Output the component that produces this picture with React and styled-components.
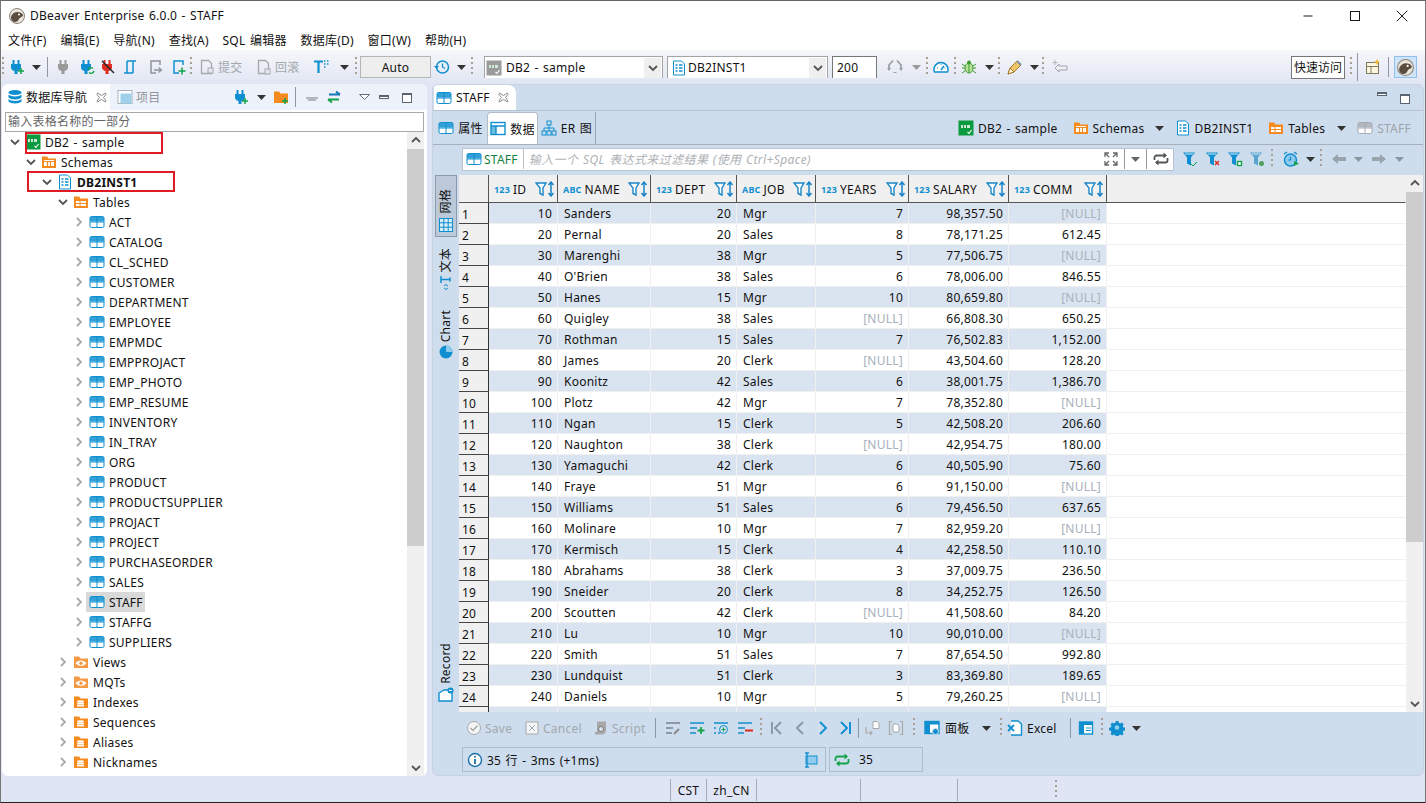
import React from 'react';
import styled, { createGlobalStyle } from 'styled-components';

const FONT = `"Noto Sans", "Noto Sans CJK SC", sans-serif`;
const BLUE = '#0f8fd0';
const ORANGE = '#f58a1f';
const GREEN = '#12a34a';
const GREY = '#a8a8a8';

const Ico = ({ s = 16, children }) => (
  <svg width={s} height={s} viewBox="0 0 16 16" style={{ display: 'block', flex: 'none' }}>
    {children}
  </svg>
);

const TableIcon = ({ c = BLUE }) => (
  <Ico>
    <rect x="1" y="2.5" width="14" height="11" rx="1.5" fill="#fff" stroke={c} />
    <rect x="1" y="2.5" width="14" height="5" rx="1.5" fill={c} opacity="0.85" />
    <path d="M8 3v10M1 8h14" stroke={c} fill="none" />
  </Ico>
);

const Folder = ({ children, c = ORANGE }) => (
  <Ico>
    <path d="M1 2.5h5l1.5 2H15v9.5H1z" fill={c} />
    {children}
  </Ico>
);

const FolderTable = () => (
  <Folder>
    <path d="M3 7h10v5H3z" fill="#fff" />
    <path d="M3 9.5h10M7 7v5" stroke={ORANGE} />
  </Folder>
);

const FolderColumns = () => (
  <Folder>
    <path d="M3 6h10v6H3z" fill="#fff" />
    <path d="M3 7.5h10M6.5 8v4M9.5 8v4" stroke={ORANGE} strokeWidth="1.2" />
  </Folder>
);

const FolderEye = () => (
  <Folder c="#f39a45">
    <path d="M2.5 9.2c3-3.6 8-3.6 11 0-3 3.4-8 3.4-11 0z" fill="#fff" />
    <circle cx="8" cy="9.2" r="1.7" fill="#f39a45" />
  </Folder>
);

const FolderStack = () => (
  <Folder>
    <ellipse cx="7.5" cy="7.5" rx="3.5" ry="1.3" fill="#fff" />
    <path d="M4 9h7v1.4H4zM4 11h7v1.4H4z" fill="#fff" />
  </Folder>
);

const Db2Icon = ({ c = '#0a9a3f' }) => (
  <Ico>
    <rect x="0.5" y="0.5" width="15" height="15" fill={c} />
    <path d="M3 5h2v3H3zM6 5h2v3H6zM9 5h3v3H9z" fill="#cfe9d6" />
    <path d="M9.500 12l1.500 1.500 2.500-3.500" stroke="#fff" strokeWidth="1.100" fill="none" />
  </Ico>
);

const SchemaIcon = () => (
  <Ico>
    <path d="M2.5 1h8l3 3v11h-11z" fill="#fff" stroke={BLUE} />
    <path d="M4.5 5h2M8 5h3.5M4.5 8h2M8 8h3.5M4.5 11h2M8 11h3.5" stroke={BLUE} strokeWidth="1.4" />
  </Ico>
);

const Chevron = ({ down }) => (
  <svg width="10" height="10" viewBox="0 0 10 10" style={{ display: 'block', flex: 'none' }}>
    <path
      d={down ? 'M1 3l4 4 4-4' : 'M3 1l4 4-4 4'}
      fill="none"
      stroke={down ? '#555' : '#aaa'}
      strokeWidth="1.8"
    />
  </svg>
);

const Caret = ({ c = '#333' }) => (
  <svg width="9" height="5" viewBox="0 0 9 5" style={{ display: 'block' }}>
    <path d="M0 0h9L4.500 5z" fill={c} />
  </svg>
);

const PlugShape = ({ c }) => (
  <g fill={c}>
    <rect x="3.500" y="1" width="2" height="4" />
    <rect x="8.500" y="1" width="2" height="4" />
    <path d="M2 5h10v3a5 4 0 0 1-3.500 4v3h-3v-3A5 4 0 0 1 2 8z" />
  </g>
);

const PlugPlus = () => (
  <Ico>
    <PlugShape c={BLUE} />
    <path d="M12 9v6M9 12h6" stroke={GREEN} strokeWidth="1.5" />
  </Ico>
);

const PlugGrey = () => (
  <Ico>
    <PlugShape c="#9a9a9a" />
  </Ico>
);

const PlugRefresh = () => (
  <Ico>
    <PlugShape c={BLUE} />
    <path d="M9 11a3 3 0 0 1 5-1.500M15 12a3 3 0 0 1-5 1.500" stroke={GREEN} strokeWidth="1.300" fill="none" />
  </Ico>
);

const PlugOff = () => (
  <Ico>
    <PlugShape c="#e02b20" />
    <path d="M2 2l12 12" stroke="#222" strokeWidth="1.400" />
  </Ico>
);

const TxIcon = () => (
  <Ico>
    <path d="M5 2h9M5 2v12M11 2v12M2 14h9" stroke={BLUE} strokeWidth="1.500" fill="none" />
  </Ico>
);

const TxArrowIcon = ({ c = '#8d949c', plus }) => (
  <Ico>
    <path d="M4 5V2h9v4M4 2v12h5" stroke={c} strokeWidth="1.500" fill="none" />
    {plus ? (
      <path d="M12 8.500v7M8.500 12h7" stroke={GREEN} strokeWidth="1.500" />
    ) : (
      <path d="M7 11h7M11.500 8.500L14.500 11l-3 2.500" stroke={c} strokeWidth="1.300" fill="none" />
    )}
  </Ico>
);

const PageIcon = ({ back }) => (
  <Ico>
    <path d="M2.500 1.500h7l3 3v10h-10z" fill="none" stroke={GREY} strokeWidth="1.300" />
    <rect x="9" y={back ? 10 : 9} width="5" height="5" fill="#e3e9f4" stroke={GREY} />
  </Ico>
);

const RowLinkIcon = () => (
  <Ico>
    <path d="M2 7v6h6M6 11l2 2-2 2" fill="none" stroke={GREY} strokeWidth="1.200" />
    <path d="M9 1.500h4l2 2v5H9z" fill="#fff" stroke={GREY} />
  </Ico>
);

const RowDocIcon = () => (
  <Ico>
    <path d="M4 1.500H1.500v13H4M12 1.500h2.500v13H12" fill="none" stroke={GREY} strokeWidth="1.200" />
    <path d="M5 4h4l2 2v6H5z" fill="#fff" stroke={GREY} />
  </Ico>
);

const FormatIcon = () => (
  <Ico>
    <path d="M1 2.500h9M5.500 2.500V14" stroke={BLUE} strokeWidth="2.200" fill="none" />
    <path d="M11 2h1.500M14 2h1.500M11 5h1.500M14 5h1.500M11 8h1.500" stroke={BLUE} strokeWidth="1.400" />
  </Ico>
);

const ClockIcon = ({ c = BLUE }) => (
  <Ico>
    <circle cx="8.500" cy="8" r="6" fill="none" stroke={c} strokeWidth="1.500" />
    <path d="M8.500 4.500V8l2.500 1.500" stroke={c} strokeWidth="1.300" fill="none" />
    <path d="M0 7l2.500 3L5 7z" fill={c} />
  </Ico>
);

const AlarmIcon = () => (
  <Ico>
    <circle cx="7.500" cy="9" r="6" fill="#8fcbee" stroke={BLUE} strokeWidth="1.500" />
    <path d="M1 3l3-2M14 3l-3-2" stroke={BLUE} strokeWidth="1.500" />
    <path d="M7.500 5.500V9H5" stroke={BLUE} strokeWidth="1.200" fill="none" />
    <path d="M11 10l5 2.500-5 2.500z" fill={GREEN} />
  </Ico>
);

const RollbackIcon = () => (
  <Ico>
    <path d="M6 1.500L2 6v5M10 1.500L14 6v5" stroke="#9aa0a6" strokeWidth="1.800" fill="none" />
    <path d="M0 9l2 3 2-3zM12 9l2 3 2-3z" fill="#9aa0a6" />
    <path d="M6.500 13.500h3" stroke="#9aa0a6" />
  </Ico>
);

const GaugeIcon = () => (
  <Ico>
    <path d="M1.500 13a7 7 0 1 1 13 0z" fill="#fff" stroke={BLUE} strokeWidth="1.500" />
    <path d="M8 11l3-4" stroke={BLUE} strokeWidth="1.500" />
    <path d="M4 9h1M11.500 9h1M8 5v1" stroke={BLUE} />
  </Ico>
);

const BugIcon = () => (
  <Ico>
    <ellipse cx="8" cy="9" rx="4" ry="5" fill="#b7e29a" stroke="#3d9b2f" />
    <circle cx="8" cy="3.500" r="2" fill="#3d9b2f" />
    <path d="M8 5v9M1 5l3 2M15 5l-3 2M1 9h3M15 9h-3M1 14l3-2M15 14l-3-2" stroke="#3d9b2f" />
  </Ico>
);

const PenIcon = () => (
  <Ico>
    <path d="M1 15l2-6 7-7 4 4-7 7z" fill="#efc56a" stroke="#a57a2a" />
    <path d="M1 15l2-6 4 4z" fill="#fff2d0" stroke="#a57a2a" />
    <path d="M10 2l4 4" stroke="#7b8fa6" strokeWidth="2" />
  </Ico>
);

const HandIcon = () => (
  <Ico>
    <path d="M7 5L3 9l4 4v-2h8V7H7z" fill="#eef0f3" stroke="#a0a6ae" />
    <path d="M3 1v5M.5 3.500h5" stroke="#b4b8bd" />
  </Ico>
);

const PerspectiveIcon = () => (
  <Ico>
    <rect x="1.500" y="3.500" width="12" height="11" fill="#fdf6df" stroke="#7e7a62" />
    <path d="M1.500 7.500h12M6 7.500v7" stroke="#7e7a62" />
    <path d="M12 0l1 2 2 1-2 1-1 2-1-2-2-1 2-1z" fill="#f2b632" />
  </Ico>
);

const BeaverLogo = ({ s = 16 }) => (
  <svg width={s} height={s} viewBox="0 0 16 16" style={{ display: 'block', flex: 'none' }}>
    <circle cx="8" cy="8" r="7.500" fill="#e9e4dd" stroke="#8c8377" />
    <path d="M2 10c0-3 3-6 6-6 3 0 5 1 6 3 0 2-3 2-4 4-1 2-2 3-4 3-2 0-4-2-4-4z" fill="#5c4c40" />
    <circle cx="10" cy="6.500" r="1" fill="#fff" />
  </svg>
);

const CrossTab = () => (
  <svg width="11" height="11" viewBox="0 0 11 11" style={{ display: 'block', flex: 'none' }}>
    <path
      d="M1.500 1L5.500 3.500 9.500 1l.5 1.500L7.500 5.500 10 9l-.5 1-4-2.500-4 2.500L1 9l2.500-3.500L1 2.500z"
      fill="#fff"
      stroke="#8a8a8a"
    />
  </svg>
);

const SwapArrows = () => (
  <Ico>
    <path d="M3 5.500h11M10 2.500l4 3" stroke="#1676b8" strokeWidth="2" fill="none" />
    <path d="M13 10.500H2M6 13.500l-4-3" stroke={GREEN} strokeWidth="2" fill="none" />
  </Ico>
);

const FunnelIcon = ({ c = BLUE, children }) => (
  <Ico>
    <path d="M1 1.500h12l-4 5v8l-4-2v-6z" fill={c} />
    <path d="M3 3h8" stroke="#cfe8f7" />
    {children}
  </Ico>
);

const SortFilter = () => (
  <svg width="20" height="16" viewBox="0 0 20 16" style={{ display: 'block', flex: 'none' }}>
    <path d="M1 2h10L8 7v7L5 12.500V7z" fill="#fff" stroke="#1a86c7" strokeWidth="1.400" />
    <path d="M16 1v14M13.500 4L16 1l2.500 3M13.500 12l2.500 3 2.500-3" fill="none" stroke="#1a86c7" strokeWidth="1.500" />
  </svg>
);

const ArrowFat = ({ left, c = '#9aa4ad' }) => (
  <Ico>
    <path d={left ? 'M1 8l6-5v3h8v4H7v3z' : 'M15 8L9 3v3H1v4h8v3z'} fill={c} />
  </Ico>
);

const GridIcon = () => (
  <Ico>
    <rect x="1.500" y="1.500" width="13" height="13" fill="#d9ecf7" stroke={BLUE} />
    <path d="M1.500 5.800h13M1.500 10.200h13M5.800 1.500v13M10.200 1.500v13" stroke={BLUE} />
  </Ico>
);

const PieIcon = () => (
  <Ico>
    <circle cx="8" cy="8" r="6.500" fill={BLUE} />
    <path d="M8 8V1.500A6.500 6.500 0 0 1 14.500 8z" fill="#8cc9ec" />
  </Ico>
);

const TextIcon = () => (
  <Ico>
    <path d="M3 1v7M3 4.500h9M12 2.500v4" stroke={BLUE} strokeWidth="1.500" fill="none" />
    <path d="M6 11l2-1.500 2 1.500M6 13l2 1.500 2-1.500" stroke={BLUE} fill="none" />
  </Ico>
);

const RecordIcon = () => (
  <Ico>
    <path d="M1 6l5-3h8v11H1z" fill="#fff" stroke={BLUE} strokeWidth="1.400" />
    <circle cx="12.500" cy="3.500" r="3" fill={BLUE} />
    <path d="M11 3.500h3" stroke="#fff" />
  </Ico>
);

const DataTabIcon = () => (
  <Ico>
    <rect x="1" y="1.500" width="14" height="12" fill="#fff" stroke={BLUE} strokeWidth="1.400" />
    <path d="M1 5h14M6 5v8" stroke={BLUE} strokeWidth="1.400" />
    <path d="M1 5h5v8H1z" fill={BLUE} opacity="0.6" />
  </Ico>
);

const ErIcon = () => (
  <Ico>
    <rect x="6" y="1" width="4" height="4" fill="none" stroke={BLUE} />
    <rect x="1" y="11" width="4" height="4" fill="none" stroke={BLUE} />
    <rect x="6" y="11" width="4" height="4" fill="none" stroke={BLUE} />
    <rect x="11" y="11" width="4" height="4" fill="none" stroke={BLUE} />
    <path d="M8 5v6M3 11V8h10v3" fill="none" stroke={BLUE} />
  </Ico>
);

const ExpandIcon = () => (
  <Ico>
    <path d="M2 6V2h4M14 6V2h-4M2 10v4h4M14 10v4h-4M2 2l4 4M14 2l-4 4M2 14l4-4M14 14l-4-4" fill="none" stroke="#666" strokeWidth="1.300" />
  </Ico>
);

const RefreshIcon = ({ c = '#555' }) => (
  <Ico>
    <path d="M1.500 9V6.500a2 2 0 0 1 2-2H13M14.500 7v2.500a2 2 0 0 1-2 2H3" fill="none" stroke={c} strokeWidth="1.800" />
    <path d="M10.500 1.500l3.500 3-3.500 3zM5.500 8.500l-3.500 3 3.500 3z" fill={c} />
  </Ico>
);

const SaveIcon = () => (
  <Ico>
    <circle cx="8" cy="8" r="6.500" fill="#f3f5f7" stroke={GREY} />
    <path d="M4.500 8l2.500 2.500 4.500-5" fill="none" stroke={GREY} strokeWidth="1.400" />
  </Ico>
);

const CancelIcon = () => (
  <Ico>
    <rect x="2" y="2" width="12" height="12" fill="#f3f5f7" stroke={GREY} />
    <path d="M5 5l6 6M11 5l-6 6" stroke={GREY} />
  </Ico>
);

const ScriptIcon = () => (
  <Ico>
    <path d="M4 1.500h9V10a4 4 0 0 1-4 4.500H2V12h2z" fill={GREY} />
    <circle cx="8" cy="9" r="2.500" fill="#dfe7f0" stroke="#777" />
  </Ico>
);

const RowsIcon = ({ c = BLUE, mark, dash }) => (
  <Ico>
    <path d="M1 3h14" stroke={c} strokeWidth="1.500" />
    <path d={dash ? 'M1 8h2M1 13h2M5 13h2' : 'M1 8h7M1 13h6'} stroke={c} strokeWidth="1.500" />
    {mark === 'plus' && <path d="M12 7v7M8.500 10.500h7" stroke={GREEN} strokeWidth="1.800" />}
    {mark === 'minus' && <path d="M8 10.500h8" stroke="#e0281e" strokeWidth="2" />}
    {mark === 'copy' && (
      <>
        <circle cx="10.500" cy="9.500" r="4" fill="none" stroke={c} />
        <path d="M10.500 7.500v4M8.500 9.500h4" stroke={GREEN} />
      </>
    )}
    {mark === 'edit' && <path d="M9 14l5-5" stroke="#888" strokeWidth="2" />}
  </Ico>
);

const NavIcon = ({ d, c = BLUE }) => (
  <Ico>
    <path d={d} fill="none" stroke={c} strokeWidth="1.900" />
  </Ico>
);

const PanelIcon = () => (
  <Ico>
    <rect x="1" y="1.500" width="14" height="12" fill="#fff" stroke={BLUE} strokeWidth="1.400" />
    <path d="M1 1.500h14v3H1zM1 4.500h5v9H1z" fill={BLUE} />
    <circle cx="11.500" cy="11.500" r="3" fill={BLUE} stroke="#cedded" />
  </Ico>
);

const ExcelIcon = () => (
  <Ico>
    <path d="M4 1h7l3.500 3v11H4" fill="#fff" stroke={BLUE} strokeWidth="1.400" />
    <path d="M1 5l6 6M7 5l-6 6" stroke={BLUE} strokeWidth="1.800" />
  </Ico>
);

const FormIcon = () => (
  <Ico>
    <rect x="1.500" y="2" width="13" height="12" fill="#fff" stroke={BLUE} strokeWidth="1.400" />
    <path d="M1.500 2h13v3h-13zM1.500 5H6v9H1.500z" fill={BLUE} />
    <path d="M8 8h5M8 10.500h5" stroke={BLUE} />
  </Ico>
);

const GearIcon = () => (
  <Ico>
    <path
      d="M6.500 1h3l.4 2 1.800.8 1.700-1.100 2 2.100-1.100 1.700.7 1.700 2 .3v3l-2 .4-.7 1.700 1.100 1.700-2 2-1.700-1.100-1.800.7-.4 2h-3l-.4-2-1.800-.7-1.700 1.100-2-2 1.100-1.700-.7-1.700-2-.4v-3l2-.3.7-1.700-1.100-1.700 2-2.100 1.700 1.100 1.800-.8z"
      fill={BLUE}
      transform="scale(.9) translate(1 0)"
    />
    <circle cx="8" cy="7.500" r="2.300" fill="#8fd0f2" />
  </Ico>
);

const InfoIcon = () => (
  <Ico>
    <circle cx="8" cy="8" r="6.500" fill="#fff" stroke="#1b6fa8" strokeWidth="1.400" />
    <path d="M8 7v5" stroke="#1b6fa8" strokeWidth="1.800" />
    <circle cx="8" cy="4.800" r="1" fill="#1b6fa8" />
  </Ico>
);

const PinIcon = () => (
  <Ico>
    <rect x="4" y="4" width="11" height="8" fill="#8fcbee" stroke={BLUE} />
    <path d="M3 1h4M3 15h4M5 1v14" stroke={BLUE} strokeWidth="1.300" />
  </Ico>
);

const GlobalStyle = createGlobalStyle`
  html, body {
    margin: 0;
    padding: 0;
    background: #fff;
  }
  * {
    box-sizing: border-box;
  }
`;

const Root = styled.div`
  width: 1426px;
  height: 803px;
  display: flex;
  flex-direction: column;
  font-family: ${FONT};
  font-size: 12px;
  letter-spacing: 0.25px;
  word-spacing: 1px;
  color: #111;
  border-top: 1px solid #666;
  border-bottom: 1px solid #222;
  border-left: 1px solid #777;
  border-right: 1px solid #777;
  overflow: hidden;
  background: #dfe5f4;
`;

const TitleBar = styled.div`
  height: 29px;
  background: #fff;
  display: flex;
  align-items: center;
  padding-left: 8px;
  gap: 5px;
  flex: none;
`;

const WindowButtons = styled.div`
  margin-left: auto;
  display: flex;
  align-items: center;
  margin-right: 17px;
  gap: 35px;
`;

const MenuBar = styled.div`
  height: 20px;
  background: #fff;
  display: flex;
  align-items: center;
  padding-left: 7px;
  gap: 13.75px;
  flex: none;
`;

const Toolbar = styled.div`
  height: 34px;
  flex: none;
  display: flex;
  align-items: center;
  background: linear-gradient(#f6f7fa, #e1e6f4);
`;

const Slot = styled.div`
  width: ${(p) => p.$w}px;
  flex: none;
  display: flex;
  align-items: center;
  justify-content: ${(p) => (p.$left ? 'flex-start' : 'center')};
  gap: ${(p) => p.$gap || 0}px;
  color: ${(p) => p.$color || 'inherit'};
  margin-left: ${(p) => p.$ml || 0}px;
`;

const Handle = styled.div`
  width: 2px;
  height: 20px;
  flex: none;
  margin: 0 ${(p) => p.$m ?? 2}px;
  background: repeating-linear-gradient(#a8a095 0 2px, transparent 2px 5px);
`;

const Sep = styled.div`
  width: 1px;
  height: ${(p) => p.$h || 20}px;
  flex: none;
  background: ${(p) => p.$c || '#8e97a3'};
  margin: 0 ${(p) => p.$m ?? 3}px;
`;

const AutoButton = styled.div`
  width: 71px;
  height: 22px;
  margin-left: 2px;
  border: 1px solid #b5b5b5;
  background: #eeeeee;
  display: flex;
  align-items: center;
  justify-content: center;
  flex: none;
`;

const Combo = styled.div`
  width: ${(p) => p.$w}px;
  height: 22px;
  margin-left: ${(p) => p.$ml}px;
  flex: none;
  border: 1px solid #a5a5a5;
  border-bottom: none;
  background: #fff;
  display: flex;
  align-items: center;
  padding: 0 1px 0 ${(p) => p.$pl}px;
  gap: ${(p) => p.$gap}px;
`;

const ComboArrow = styled.div`
  margin-left: auto;
  width: 17px;
  height: 20px;
  background: #efefef;
  display: flex;
  align-items: center;
  justify-content: center;
`;

const NumInput = styled.div`
  width: 45px;
  height: 22px;
  margin-left: 4px;
  flex: none;
  border: 1px solid #777;
  border-bottom: none;
  background: #fff;
  padding-left: 4px;
  line-height: 21px;
`;

const ToolRight = styled.div`
  margin-left: auto;
  display: flex;
  align-items: center;
  padding-right: 8px;
`;

const QuickAccess = styled.div`
  width: 54px;
  height: 23px;
  border: 1px solid #777;
  background: #fff;
  text-align: center;
  line-height: 21px;
  letter-spacing: 0;
`;

const PerspectiveBox = styled.div`
  width: 23px;
  height: 22px;
  background: #cfe4f8;
  border: 1px solid #92c0ec;
  display: flex;
  align-items: center;
  justify-content: center;
`;

const Body = styled.div`
  flex: 1;
  min-height: 0;
  display: flex;
  padding: 0 1px;
  gap: 5px;
`;

const LeftPanel = styled.div`
  width: 425px;
  height: 692px;
  flex: none;
  background: #fff;
  border-radius: 6px;
  display: flex;
  flex-direction: column;
  overflow: hidden;
`;

const PanelHead = styled.div`
  height: 26px;
  flex: none;
  display: flex;
  align-items: center;
  background: #edf1fa;
`;

const ViewTab = styled.div`
  width: 108px;
  height: 100%;
  flex: none;
  background: #fff;
  display: flex;
  align-items: center;
  padding-left: 5px;
  gap: 3px;
  border-radius: 6px 0 0 0;
`;

const TreeFilter = styled.div`
  height: 20px;
  margin: 2px 3px 0;
  flex: none;
  border: 1px solid #a9a9a9;
  color: #666;
  padding-left: 2px;
  line-height: 18px;
`;

const TreeArea = styled.div`
  flex: 1;
  min-height: 0;
  display: flex;
  margin-right: 3px;
`;

const TreeList = styled.div`
  flex: 1;
  min-width: 0;
`;

const Row = styled.div`
  height: 20px;
  display: flex;
  align-items: center;
  position: relative;
  padding-left: ${(p) => 8 + p.$level * 16}px;
  gap: 2px;
`;

const NodeBody = styled.div`
  display: flex;
  align-items: center;
  gap: 4px;
  height: 20px;
  padding: 0 2px 0 3px;
  background: ${(p) => (p.$active ? '#d9d9d9' : 'transparent')};
  font-weight: ${(p) => (p.$bold ? 700 : 400)};
`;

const Callout = styled.div`
  position: absolute;
  left: ${(p) => p.$left}px;
  width: ${(p) => p.$w}px;
  top: ${(p) => p.$top}px;
  height: ${(p) => p.$h}px;
  border: 2px solid #e01b24;
  pointer-events: none;
`;

const Scrollbar = styled.div`
  width: 17px;
  flex: none;
  background: #f0f0f0;
  display: flex;
  flex-direction: column;
`;

const ScrollEnd = styled.div`
  height: 17px;
  flex: none;
  display: flex;
  align-items: center;
  justify-content: center;
  transform: ${(p) => (p.$up ? 'scaleY(-1)' : 'none')};
  margin-top: ${(p) => (p.$bottom ? 'auto' : '0')};
`;

const ScrollThumb = styled.div`
  height: ${(p) => p.$h}px;
  flex: none;
  background: #cdcdcd;
`;

const RightPanel = styled.div`
  width: 992px;
  height: 692px;
  flex: none;
  background: #cedded;
  border: 1px solid #c9d2de;
  border-radius: 6px;
  display: flex;
  flex-direction: column;
  overflow: hidden;
`;

const EditorTabs = styled.div`
  height: 26px;
  flex: none;
  display: flex;
  align-items: flex-end;
  border-bottom: 1px solid #b9c3cf;
  padding-left: 1px;
`;

const EditorTab = styled.div`
  width: 82px;
  height: 25px;
  background: #fff;
  border-radius: 0 8px 0 0;
  display: flex;
  align-items: center;
  padding-left: 2px;
  gap: 4px;
`;

const ViewControls = styled.div`
  margin-left: auto;
  align-self: center;
  display: flex;
  gap: 13px;
  margin-right: 13px;
`;

const MinBox = styled.div`
  width: 10px;
  height: ${(p) => (p.$flat ? 4 : 10)}px;
  border: 1px solid #5a6470;
  border-top-width: 2px;
  background: #fff;
  margin-top: ${(p) => (p.$flat ? 0 : 2)}px;
`;

const SubTabs = styled.div`
  height: 34px;
  flex: none;
  display: flex;
  align-items: stretch;
  padding-top: 1px;
  padding-left: 1px;
  border-bottom: 1px solid #a7b0bb;
`;

const SubTab = styled.div`
  width: ${(p) => p.$w}px;
  display: flex;
  align-items: center;
  justify-content: center;
  gap: 4px;
  flex: none;
  background: ${(p) => (p.$active ? '#fff' : 'transparent')};
  border: ${(p) => (p.$active ? '1px solid #b3bcc7' : 'none')};
  border-bottom: none;
  border-radius: ${(p) => (p.$active ? '4px 4px 0 0' : '0')};
  border-right: ${(p) => (p.$last ? '1px solid #9aa3ae' : undefined)};
`;

const Crumbs = styled.div`
  margin-left: auto;
  display: flex;
  align-items: center;
  padding-right: 12px;
`;

const Crumb = styled.div`
  display: flex;
  align-items: center;
  gap: 4px;
  margin-left: ${(p) => p.$ml || 0}px;
  color: ${(p) => p.$color || 'inherit'};
`;

const FilterRow = styled.div`
  height: 30px;
  flex: none;
  display: flex;
  align-items: center;
  padding: 0 0 2px 29px;
`;

const FilterBox = styled.div`
  width: 712px;
  height: 23px;
  background: #fff;
  border: 1px solid #b9c3cf;
  display: flex;
  align-items: center;
  padding-left: 3px;
  gap: 2px;
  flex: none;
`;

const FilterName = styled.span`
  color: #15803d;
`;

const FilterHint = styled.span`
  color: #aeb1b5;
  font-style: italic;
  letter-spacing: 0.4px;
`;

const FilterTail = styled.div`
  margin-left: auto;
  display: flex;
  align-items: center;
`;

const GridRow = styled.div`
  height: 537px;
  flex: none;
  display: flex;
`;

const SideTabs = styled.div`
  width: 26px;
  flex: none;
  display: flex;
  flex-direction: column;
  align-items: center;
  padding-bottom: 7px;
`;

const SideTab = styled.div`
  width: 22px;
  height: ${(p) => p.$h}px;
  flex: none;
  display: flex;
  flex-direction: column;
  align-items: center;
  justify-content: flex-end;
  gap: ${(p) => p.$gap ?? 3}px;
  padding-bottom: 3px;
  margin-top: ${(p) => p.$mt || 0}px;
  background: ${(p) => (p.$active ? '#bcc9d8' : 'transparent')};
  border: ${(p) => (p.$active ? '1px solid #8f9aa7' : 'none')};
`;

const SideLabel = styled.div`
  writing-mode: vertical-rl;
  text-orientation: sideways;
  transform: rotate(180deg);
  line-height: 16px;
`;

const GridWrap = styled.div`
  flex: 1;
  min-width: 0;
  overflow: hidden;
  background: #fff;
`;

const Table = styled.table`
  width: 100%;
  table-layout: fixed;
  border-collapse: separate;
  border-spacing: 0;
  font-size: 12px;
`;

const Head = styled.th`
  height: 28px;
  padding: 1px 2px 0 5px;
  background: #f0f0f0;
  font-weight: 400;
  text-align: left;
  border-right: 1px solid ${(p) => (p.$plain ? '#f0f0f0' : '#555')};
  border-bottom: 1px solid #555;
`;

const HeadInner = styled.div`
  display: flex;
  align-items: center;
  gap: 3px;
`;

const TypeBadge = styled.span`
  color: ${BLUE};
  font-size: 9px;
  font-weight: 700;
  letter-spacing: 0.2px;
`;

const HeadName = styled.span`
  flex: 1;
  white-space: nowrap;
`;

const RowNum = styled.td`
  height: 21px;
  padding: 2px 0 0 3px;
  background: #f0f0f0;
  border-right: 1px solid #333;
  border-bottom: 1px solid #444;
`;

const Cell = styled.td`
  height: 21px;
  padding: 0 5px 0 6px;
  text-align: ${(p) => (p.$num ? 'right' : 'left')};
  white-space: nowrap;
  overflow: hidden;
  color: ${(p) => (p.$null ? '#a7b0bb' : 'inherit')};
  background: ${(p) => (p.$odd ? '#dae4f0' : '#fff')};
  border-right: 1px solid #f0f0f0;
  border-bottom: 1px solid #f0f0f0;
`;

const Filler = styled.td`
  background: #fff;
  border-bottom: 1px solid #f0f0f0;
`;

const BottomBar = styled.div`
  height: 28px;
  margin-top: 2px;
  flex: none;
  display: flex;
  align-items: center;
  padding-left: 24px;
`;

const Muted = styled.span`
  color: #a2a8ae;
`;

const StatusRow = styled.div`
  display: flex;
  padding-left: 29px;
  margin-top: 5px;
  gap: 3px;
`;

const StatusBox = styled.div`
  width: ${(p) => p.$w}px;
  height: 25px;
  border: 1px solid #aebccb;
  display: flex;
  align-items: center;
  padding: 0 5px 0 4px;
  gap: ${(p) => p.$gap}px;
  flex: none;
`;

const StatusPin = styled.div`
  margin-left: auto;
  margin-right: 2px;
`;

const BottomStatus = styled.div`
  height: 24px;
  flex: none;
  display: flex;
  align-items: center;
  padding-left: 669px;
`;

const StatusCell = styled.div`
  width: ${(p) => p.$w}px;
  height: 22px;
  flex: none;
  border-left: 1px solid #a5abb5;
  display: flex;
  align-items: center;
  justify-content: center;
`;

const rows = [
  [10, 'Sanders', 20, 'Mgr', 7, '98,357.50', null],
  [20, 'Pernal', 20, 'Sales', 8, '78,171.25', '612.45'],
  [30, 'Marenghi', 38, 'Mgr', 5, '77,506.75', null],
  [40, "O'Brien", 38, 'Sales', 6, '78,006.00', '846.55'],
  [50, 'Hanes', 15, 'Mgr', 10, '80,659.80', null],
  [60, 'Quigley', 38, 'Sales', null, '66,808.30', '650.25'],
  [70, 'Rothman', 15, 'Sales', 7, '76,502.83', '1,152.00'],
  [80, 'James', 20, 'Clerk', null, '43,504.60', '128.20'],
  [90, 'Koonitz', 42, 'Sales', 6, '38,001.75', '1,386.70'],
  [100, 'Plotz', 42, 'Mgr', 7, '78,352.80', null],
  [110, 'Ngan', 15, 'Clerk', 5, '42,508.20', '206.60'],
  [120, 'Naughton', 38, 'Clerk', null, '42,954.75', '180.00'],
  [130, 'Yamaguchi', 42, 'Clerk', 6, '40,505.90', '75.60'],
  [140, 'Fraye', 51, 'Mgr', 6, '91,150.00', null],
  [150, 'Williams', 51, 'Sales', 6, '79,456.50', '637.65'],
  [160, 'Molinare', 10, 'Mgr', 7, '82,959.20', null],
  [170, 'Kermisch', 15, 'Clerk', 4, '42,258.50', '110.10'],
  [180, 'Abrahams', 38, 'Clerk', 3, '37,009.75', '236.50'],
  [190, 'Sneider', 20, 'Clerk', 8, '34,252.75', '126.50'],
  [200, 'Scoutten', 42, 'Clerk', null, '41,508.60', '84.20'],
  [210, 'Lu', 10, 'Mgr', 10, '90,010.00', null],
  [220, 'Smith', 51, 'Sales', 7, '87,654.50', '992.80'],
  [230, 'Lundquist', 51, 'Clerk', 3, '83,369.80', '189.65'],
  [240, 'Daniels', 10, 'Mgr', 5, '79,260.25', null],
  [250, 'Wheeler', 51, 'Clerk', 6, '74,460.00', '513.30'],
];

const columns = [
  { name: 'ID', type: '123', w: 69 },
  { name: 'NAME', type: 'ABC', w: 93 },
  { name: 'DEPT', type: '123', w: 86 },
  { name: 'JOB', type: 'ABC', w: 79 },
  { name: 'YEARS', type: '123', w: 93 },
  { name: 'SALARY', type: '123', w: 100 },
  { name: 'COMM', type: '123', w: 98 },
];

const tables = [
  'ACT', 'CATALOG', 'CL_SCHED', 'CUSTOMER', 'DEPARTMENT', 'EMPLOYEE', 'EMPMDC', 'EMPPROJACT',
  'EMP_PHOTO', 'EMP_RESUME', 'INVENTORY', 'IN_TRAY', 'ORG', 'PRODUCT', 'PRODUCTSUPPLIER',
  'PROJACT', 'PROJECT', 'PURCHASEORDER', 'SALES', 'STAFF', 'STAFFG', 'SUPPLIERS',
];

const folders = [
  ['Views', <FolderEye />],
  ['MQTs', <FolderEye />],
  ['Indexes', <FolderStack />],
  ['Sequences', <FolderStack />],
  ['Aliases', <FolderStack />],
  ['Nicknames', <FolderStack />],
];

const menus = ['文件(F)', '编辑(E)', '导航(N)', '查找(A)', 'SQL 编辑器', '数据库(D)', '窗口(W)', '帮助(H)'];

const TreeRow = ({ level, down, icon, label, bold, active, children }) => (
  <Row $level={level}>
    <Chevron down={down} />
    <NodeBody $bold={bold} $active={active}>
      {icon}
      <span>{label}</span>
    </NodeBody>
    {children}
  </Row>
);

const Tree = () => (
  <TreeList>
    <TreeRow level={0} down icon={<Db2Icon />} label="DB2 - sample">
      <Callout $left={23} $w={138} $top={0} $h={22} />
    </TreeRow>
    <TreeRow level={1} down icon={<FolderColumns />} label="Schemas" />
    <TreeRow level={2} down icon={<SchemaIcon />} label="DB2INST1" bold>
      <Callout $left={25} $w={148} $top={-1} $h={21} />
    </TreeRow>
    <TreeRow level={3} down icon={<FolderTable />} label="Tables" />
    {tables.map((t) => (
      <TreeRow key={t} level={4} icon={<TableIcon />} label={t} active={t === 'STAFF'} />
    ))}
    {folders.map(([name, icon]) => (
      <TreeRow key={name} level={3} icon={icon} label={name} />
    ))}
  </TreeList>
);

const GridTable = () => (
  <Table>
    <colgroup>
      <col style={{ width: 30 }} />
      {columns.map((c) => (
        <col key={c.name} style={{ width: c.w }} />
      ))}
      <col />
    </colgroup>
    <thead>
      <tr>
        <Head />
        {columns.map((c) => (
          <Head key={c.name}>
            <HeadInner>
              <TypeBadge>{c.type}</TypeBadge>
              <HeadName>{c.name}</HeadName>
              <SortFilter />
            </HeadInner>
          </Head>
        ))}
        <Head $plain />
      </tr>
    </thead>
    <tbody>
      {rows.map((r, i) => (
        <tr key={r[0]}>
          <RowNum>{i + 1}</RowNum>
          {r.map((v, j) => {
            const isText = j === 1 || j === 3;
            return (
              <Cell key={j} $num={!isText} $null={v === null} $odd={i % 2 === 0}>
                {v === null ? '[NULL]' : v}
              </Cell>
            );
          })}
          <Filler />
        </tr>
      ))}
    </tbody>
  </Table>
);

const App = () => (
  <Root>
    <GlobalStyle />
    <TitleBar>
      <BeaverLogo />
      <span>DBeaver Enterprise 6.0.0 - STAFF</span>
      <WindowButtons>
        <Ico s={12}>
          <path d="M2 8h12" stroke="#111" strokeWidth="1.300" />
        </Ico>
        <Ico s={12}>
          <rect x="2" y="2" width="12" height="12" fill="none" stroke="#111" strokeWidth="1.300" />
        </Ico>
        <Ico s={12}>
          <path d="M1 1l14 14M15 1L1 15" stroke="#111" strokeWidth="1.300" />
        </Ico>
      </WindowButtons>
    </TitleBar>
    <MenuBar>
      {menus.map((m) => (
        <span key={m}>{m}</span>
      ))}
    </MenuBar>
    <Toolbar>
      <Handle $m={1} />
      <Slot $w={24}><PlugPlus /></Slot>
      <Slot $w={15}><Caret /></Slot>
      <Sep />
      <Slot $w={24} $ml={1}><PlugGrey /></Slot>
      <Slot $w={22}><PlugRefresh /></Slot>
      <Slot $w={20}><PlugOff /></Slot>
      <Slot $w={24}><TxIcon /></Slot>
      <Slot $w={26}><TxArrowIcon /></Slot>
      <Slot $w={20}><TxArrowIcon c={BLUE} plus /></Slot>
      <Handle />
      <Slot $w={52} $left $gap={3} $ml={5} $color="#a2a8ae"><PageIcon />提交</Slot>
      <Slot $w={52} $left $gap={3} $ml={5} $color="#a2a8ae"><PageIcon back />回滚</Slot>
      <Slot $w={26}><FormatIcon /></Slot>
      <Slot $w={20}><Caret /></Slot>
      <Handle $m={1} />
      <AutoButton>Auto</AutoButton>
      <Slot $w={20} $ml={1}><ClockIcon /></Slot>
      <Slot $w={18}><Caret /></Slot>
      <Handle $m={1} />
      <Combo $w={179} $ml={10} $pl={1} $gap={4}>
        <Db2Icon c="#9b9b9b" />
        DB2 - sample
        <ComboArrow><Chevron down /></ComboArrow>
      </Combo>
      <Combo $w={161} $ml={4} $pl={3} $gap={1}>
        <SchemaIcon />
        DB2INST1
        <ComboArrow><Chevron down /></ComboArrow>
      </Combo>
      <NumInput>200</NumInput>
      <Slot $w={24} $ml={6}><RollbackIcon /></Slot>
      <Slot $w={18}><Caret c="#9a9a9a" /></Slot>
      <Handle $m={1} />
      <Slot $w={24}><GaugeIcon /></Slot>
      <Handle $m={1} />
      <Slot $w={24}><BugIcon /></Slot>
      <Slot $w={16}><Caret /></Slot>
      <Handle $m={1} />
      <Slot $w={26} $ml={1}><PenIcon /></Slot>
      <Slot $w={13}><Caret /></Slot>
      <Handle $m={1} />
      <Slot $w={26} $ml={2}><HandIcon /></Slot>
      <ToolRight>
        <QuickAccess>快速访问</QuickAccess>
        <Handle $m={5} />
        <Sep $h={28} $m={0} />
        <Slot $w={30}><PerspectiveIcon /></Slot>
        <Sep $m={0} />
        <Slot $w={5} />
        <PerspectiveBox><BeaverLogo s={17} /></PerspectiveBox>
      </ToolRight>
    </Toolbar>
    <Body>
      <LeftPanel>
        <PanelHead>
          <ViewTab>
            <Ico>
              <ellipse cx="8" cy="3.500" rx="6.500" ry="2.500" fill={BLUE} />
              <path d="M1.500 5.500c2 2.500 11 2.500 13 0v3c-2 2.500-11 2.500-13 0zM1.500 10c2 2.500 11 2.500 13 0v2.500c-2 2.500-11 2.500-13 0z" fill={BLUE} />
            </Ico>
            <span>数据库导航</span>
            <Slot $w={11} $ml={6}><CrossTab /></Slot>
          </ViewTab>
          <Slot $w={52} $left $gap={3} $ml={7} $color="#8f959b">
            <Ico>
              <rect x="1" y="1.500" width="14" height="13" fill="#fff" stroke="#aab3bd" />
              <rect x="3.500" y="4.500" width="11" height="10" fill="#9fd0ec" />
            </Ico>
            项目
          </Slot>
          <Slot $w={24} $ml={60}><PlugPlus /></Slot>
          <Slot $w={16}><Caret /></Slot>
          <Slot $w={24}>
            <Folder>
              <path d="M12 9v6M9 12h6" stroke={GREEN} strokeWidth="1.500" />
            </Folder>
          </Slot>
          <Sep $m={2} />
          <Slot $w={28}>
            <Ico><path d="M2 9h12M4 11h8" stroke="#a0a4aa" strokeWidth="1.300" /></Ico>
          </Slot>
          <Slot $w={16}><SwapArrows /></Slot>
          <Slot $w={16} $ml={14}>
            <svg width="11" height="6" viewBox="0 0 11 6">
              <path d="M.5.500h10L5.500 5.500z" fill="#fff" stroke="#66707c" />
            </svg>
          </Slot>
          <Slot $w={10} $ml={7}><MinBox $flat /></Slot>
          <Slot $w={36}><MinBox /></Slot>
        </PanelHead>
        <TreeFilter>输入表格名称的一部分</TreeFilter>
        <TreeArea>
          <Tree />
          <Scrollbar>
            <ScrollEnd $up><Chevron down /></ScrollEnd>
            <ScrollThumb $h={397} />
            <ScrollEnd $bottom><Chevron down /></ScrollEnd>
          </Scrollbar>
        </TreeArea>
      </LeftPanel>
      <RightPanel>
        <EditorTabs>
          <EditorTab>
            <TableIcon />
            <span>STAFF</span>
            <Slot $w={11} $ml={4}><CrossTab /></Slot>
          </EditorTab>
          <ViewControls>
            <MinBox $flat />
            <MinBox />
          </ViewControls>
        </EditorTabs>
        <SubTabs>
          <SubTab $w={53}><TableIcon />属性</SubTab>
          <SubTab $w={51} $active><DataTabIcon />数据</SubTab>
          <SubTab $w={58} $last><ErIcon />ER 图</SubTab>
          <Crumbs>
            <Crumb><Db2Icon />DB2 - sample</Crumb>
            <Crumb $ml={15}><FolderColumns />Schemas</Crumb>
            <Slot $w={30}><Caret /></Slot>
            <Crumb><SchemaIcon />DB2INST1</Crumb>
            <Crumb $ml={15}><FolderTable />Tables</Crumb>
            <Slot $w={32}><Caret /></Slot>
            <Crumb $color="#9ba2aa"><TableIcon c="#a4abb3" />STAFF</Crumb>
          </Crumbs>
        </SubTabs>
        <FilterRow>
          <FilterBox>
            <TableIcon />
            <FilterName>STAFF</FilterName>
            <Sep $c="#c0c0c0" $m={3} />
            <FilterHint>输入一个 SQL 表达式来过滤结果 (使用 Ctrl+Space)</FilterHint>
            <FilterTail>
              <Slot $w={22}><ExpandIcon /></Slot>
              <Sep $c="#999" $m={2} />
              <Slot $w={17}><Caret c="#666" /></Slot>
              <Sep $c="#999" $m={2} />
              <Slot $w={24}><RefreshIcon /></Slot>
            </FilterTail>
          </FilterBox>
          <Slot $w={24} $ml={4}>
            <FunnelIcon><path d="M9 13l2 2 4-4" stroke={GREEN} fill="none" /></FunnelIcon>
          </Slot>
          <Slot $w={22}>
            <FunnelIcon><path d="M10 10l4 4M14 10l-4 4" stroke="#e0281e" strokeWidth="1.300" /></FunnelIcon>
          </Slot>
          <Slot $w={22}>
            <FunnelIcon><rect x="10.500" y="10.500" width="4" height="4" fill="#fff" stroke={GREEN} strokeWidth="1.400" /></FunnelIcon>
          </Slot>
          <Slot $w={22}>
            <FunnelIcon c="#5aa5cf"><circle cx="12.500" cy="12.500" r="2.500" fill="#4e9e5e" /></FunnelIcon>
          </Slot>
          <Handle $m={3} />
          <Slot $w={24} $ml={3}><AlarmIcon /></Slot>
          <Slot $w={14}><Caret /></Slot>
          <Handle $m={3} />
          <Slot $w={22} $ml={3}><ArrowFat left /></Slot>
          <Slot $w={16}><Caret c="#8c96a0" /></Slot>
          <Slot $w={26}><ArrowFat /></Slot>
          <Slot $w={14}><Caret c="#8c96a0" /></Slot>
        </FilterRow>
        <GridRow>
          <SideTabs>
            <SideTab $h={62} $active>
              <SideLabel>网格</SideLabel>
              <GridIcon />
            </SideTab>
            <SideTab $h={47} $mt={10} $gap={2}>
              <SideLabel>文本</SideLabel>
              <TextIcon />
            </SideTab>
            <SideTab $h={54} $mt={15} $gap={2}>
              <SideLabel>Chart</SideLabel>
              <PieIcon />
            </SideTab>
            <SideTab $h={64} $mt={279}>
              <SideLabel>Record</SideLabel>
              <RecordIcon />
            </SideTab>
          </SideTabs>
          <GridWrap>
            <GridTable />
          </GridWrap>
          <Scrollbar>
            <ScrollEnd $up><Chevron down /></ScrollEnd>
            <ScrollThumb $h={350} />
            <ScrollEnd $bottom><Chevron down /></ScrollEnd>
          </Scrollbar>
        </GridRow>
        <BottomBar>
          <Slot $w={58} $left $gap={3} $ml={9}><SaveIcon /><Muted>Save</Muted></Slot>
          <Slot $w={69} $left $gap={3}><CancelIcon /><Muted>Cancel</Muted></Slot>
          <Slot $w={59} $left $gap={3}><ScriptIcon /><Muted>Script</Muted></Slot>
          <Sep />
          <Slot $w={24} $ml={2}><RowsIcon c="#77818b" mark="edit" /></Slot>
          <Slot $w={24}><RowsIcon mark="plus" /></Slot>
          <Slot $w={24}><RowsIcon dash mark="copy" /></Slot>
          <Slot $w={24}><RowsIcon mark="minus" /></Slot>
          <Handle $m={3} />
          <Slot $w={24}><NavIcon d="M3 2v12M12 2L6 8l6 6" c="#8c96a0" /></Slot>
          <Slot $w={22}><NavIcon d="M11 2L5 8l6 6" c="#8c96a0" /></Slot>
          <Slot $w={24}><NavIcon d="M5 2l6 6-6 6" /></Slot>
          <Slot $w={20}><NavIcon d="M13 2v12M4 2l6 6-6 6" /></Slot>
          <Sep />
          <Slot $w={20}><RowLinkIcon /></Slot>
          <Slot $w={28}><RowDocIcon /></Slot>
          <Handle $m={3} />
          <Slot $w={26} $ml={1}><PanelIcon /></Slot>
          <Slot $w={30} $left>面板</Slot>
          <Slot $w={22}><Caret /></Slot>
          <Handle $m={3} />
          <Slot $w={60} $left $gap={4} $ml={2}><ExcelIcon />Excel</Slot>
          <Sep />
          <Slot $w={24}><FormIcon /></Slot>
          <Handle $m={3} />
          <Slot $w={22}><GearIcon /></Slot>
          <Slot $w={16}><Caret /></Slot>
        </BottomBar>
        <StatusRow>
          <StatusBox $w={364} $gap={4}>
            <InfoIcon />
            <span>35 行 - 3ms (+1ms)</span>
            <StatusPin><PinIcon /></StatusPin>
          </StatusBox>
          <StatusBox $w={94} $gap={9}>
            <RefreshIcon c={GREEN} />
            <span>35</span>
          </StatusBox>
        </StatusRow>
      </RightPanel>
    </Body>
    <BottomStatus>
      <StatusCell $w={36}>CST</StatusCell>
      <StatusCell $w={50}>zh_CN</StatusCell>
      <StatusCell $w={104} />
      <StatusCell $w={97} />
      <StatusCell $w={98} />
      <Handle $m={0} />
    </BottomStatus>
  </Root>
);

export default App;
